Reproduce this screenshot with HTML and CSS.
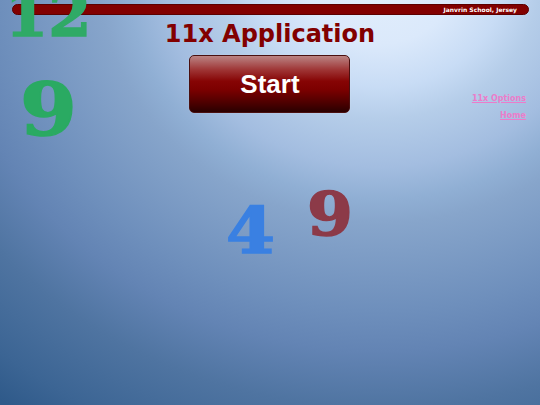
FILE: index.html
```html
<!DOCTYPE html>
<html lang="en">
<head>
<meta charset="utf-8">
<title>11x Application</title>
<link rel="stylesheet" href="styles.css">
</head>
<body>
<div class="page">
  <header class="topbar"><span class="school">Janvrin School, Jersey</span></header>
  <main class="layout">
    <div class="side"></div>
    <div class="center">
      <h1 class="title">11x Application</h1>
      <button class="start" type="button">Start</button>
    </div>
    <nav class="links">
      <a href="#" class="link">11x Options</a>
      <a href="#" class="link">Home</a>
    </nav>
  </main>
  <div class="num num-12">12</div>
  <div class="num num-9g">9</div>
  <div class="num num-4">4</div>
  <div class="num num-9r">9</div>
</div>
</body>
</html>
```
FILE: styles.css
```css
html, body {
  margin: 0;
  padding: 0;
  height: 100%;
}
body {
  background: radial-gradient(ellipse 614px 534px at 380px -20px, #e2eefc 0%, #dbe9fb 12%, #c8dcf5 20%, #b5cde9 26%, #a3bde0 35%, #90afd4 41%, #87a5cb 45.5%, #6e8fbc 62%, #6384b4 69.5%, #4f74a1 80%, #3c6594 93%, #2f5a8a 100%);
  background-color: #2f5a8a;
  font-family: "DejaVu Sans", Verdana, sans-serif;
  overflow: hidden;
}
.page {
  position: relative;
  width: 540px;
  height: 405px;
  overflow: hidden;
}
.topbar {
  margin: 4px 11px 0 12px;
  height: 9px;
  border: 1px solid #5c0000;
  border-radius: 6px;
  background: #820000;
  display: flex;
  justify-content: flex-end;
  align-items: center;
  padding-right: 11px;
}
.school {
  color: #fff;
  font-size: 6px;
  font-weight: bold;
  line-height: 9px;
}
.layout {
  display: grid;
  grid-template-columns: 1fr auto 1fr;
}
.center {
  display: flex;
  flex-direction: column;
  align-items: center;
}
.title {
  margin: 5px 0 0;
  font-size: 24px;
  line-height: 28px;
  font-weight: bold;
  color: #820000;
}
.start {
  margin-top: 7px;
  width: 161px;
  height: 58px;
  border: 1px solid #4a1010;
  border-radius: 5px;
  background: linear-gradient(to bottom, #bb8484 0%, #9e3434 25%, #860404 45%, #7c0000 60%, #4a0000 85%, #2a0000 100%);
  box-shadow: 0 0 1px rgba(255,255,255,0.5);
  color: #fff;
  font-family: "Liberation Sans", Arial, sans-serif;
  font-weight: bold;
  font-size: 26px;
  padding: 0;
}
.links {
  display: flex;
  flex-direction: column;
  align-items: flex-end;
  padding: 75px 14px 0 0;
}
.link {
  font-size: 8px;
  line-height: 17px;
  font-weight: bold;
  color: #ec7cca;
  text-decoration: underline;
}
.num {
  position: absolute;
  font-family: "DejaVu Serif", Georgia, serif;
  font-weight: bold;
  line-height: 1;
  -webkit-text-stroke: 1.5px currentColor;
  transform-origin: left top;
}
.num-12 {
  left: 5px;
  top: -16px;
  font-size: 62px;
  color: #2faa66;
}
.num-9g {
  left: 20px;
  top: 73px;
  font-size: 73px;
  color: #2aaa62;
  transform: scaleX(1.12);
}
.num-4 {
  left: 226px;
  top: 199px;
  font-size: 64px;
  color: #3a80e2;
  transform: scaleX(1.1);
}
.num-9r {
  left: 307px;
  top: 184px;
  font-size: 60px;
  color: #8c3a48;
  transform: scaleX(1.1);
}
```
